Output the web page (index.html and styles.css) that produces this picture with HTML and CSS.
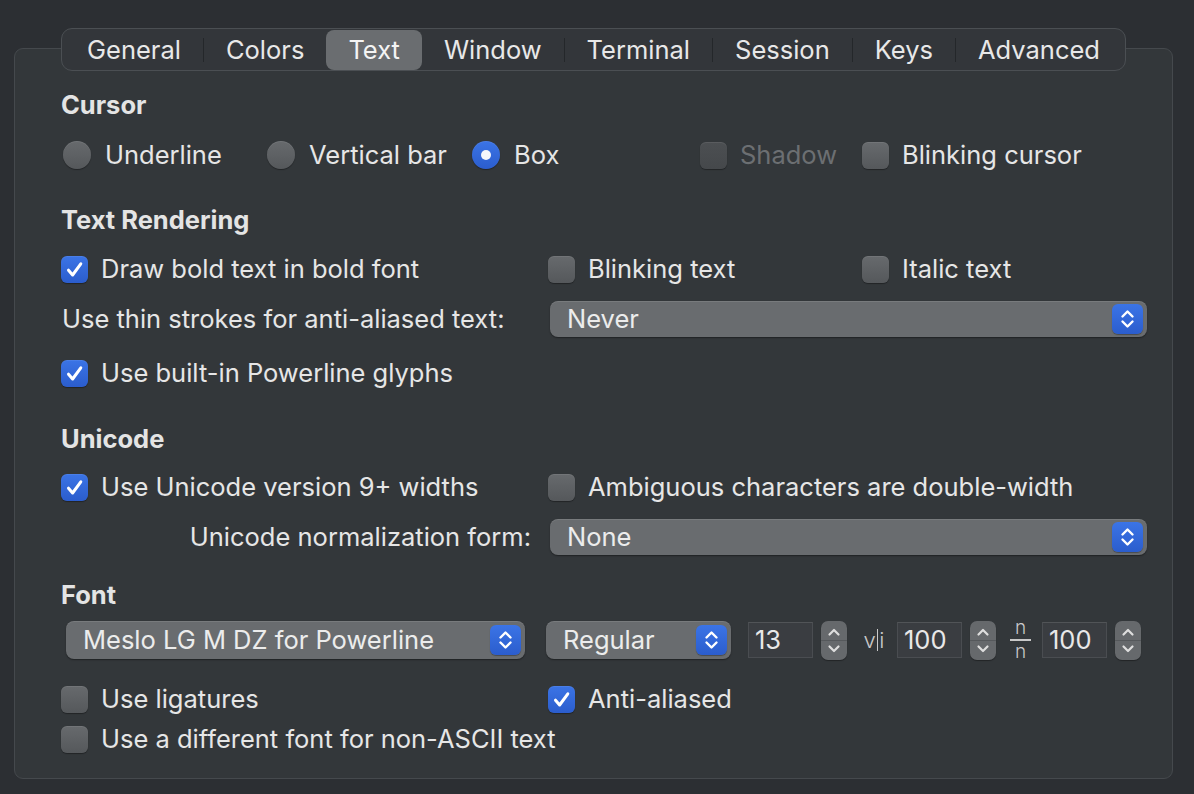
FILE: index.html
```html
<!DOCTYPE html>
<html lang="en">
<head>
<meta charset="utf-8">
<title>Profiles — Text</title>
<link rel="stylesheet" href="styles.css">
</head>
<body>
<div class="window">
  <div class="panel">
    <nav class="tabs">
      <span class="tab">General</span><span class="sep"></span>
      <span class="tab">Colors</span>
      <span class="tab active">Text</span>
      <span class="tab">Window</span><span class="sep"></span>
      <span class="tab">Terminal</span><span class="sep"></span>
      <span class="tab">Session</span><span class="sep"></span>
      <span class="tab">Keys</span><span class="sep"></span>
      <span class="tab">Advanced</span>
    </nav>

    <div class="content">
      <div class="title title-cursor">Cursor</div>
      <div class="row cursor-row">
        <label class="opt"><span class="radio"></span>Underline</label>
        <label class="opt"><span class="radio"></span>Vertical bar</label>
        <label class="opt"><span class="radio on"></span>Box</label>
        <label class="opt disabled"><span class="check"></span>Shadow</label>
        <label class="opt"><span class="check"></span>Blinking cursor</label>
      </div>

      <div class="title title-render">Text Rendering</div>
      <div class="row cols row-bold">
        <label class="opt"><span class="check on"><svg viewBox="0 0 27 27"><path d="M7.5 14.2 L11.6 19 L19.8 7.8"/></svg></span>Draw bold text in bold font</label>
        <label class="opt"><span class="check"></span>Blinking text</label>
        <label class="opt"><span class="check"></span>Italic text</label>
      </div>
      <div class="row form-row row-thin">
        <span class="form-label">Use thin strokes for anti-aliased text:</span>
        <span class="popup">Never<span class="pop-btn"><svg viewBox="0 0 31 30"><path d="M10.5 12.5 L15.5 7.5 L20.5 12.5 M10.5 17.5 L15.5 22.5 L20.5 17.5"/></svg></span></span>
      </div>
      <div class="row row-powerline">
        <label class="opt"><span class="check on"><svg viewBox="0 0 27 27"><path d="M7.5 14.2 L11.6 19 L19.8 7.8"/></svg></span>Use built-in Powerline glyphs</label>
      </div>

      <div class="title title-unicode">Unicode</div>
      <div class="row cols row-uni">
        <label class="opt"><span class="check on"><svg viewBox="0 0 27 27"><path d="M7.5 14.2 L11.6 19 L19.8 7.8"/></svg></span>Use Unicode version 9+ widths</label>
        <label class="opt span2"><span class="check"></span>Ambiguous characters are double-width</label>
      </div>
      <div class="row form-row row-norm">
        <span class="form-label right">Unicode normalization form:</span>
        <span class="popup">None<span class="pop-btn"><svg viewBox="0 0 31 30"><path d="M10.5 12.5 L15.5 7.5 L20.5 12.5 M10.5 17.5 L15.5 22.5 L20.5 17.5"/></svg></span></span>
      </div>

      <div class="title title-font">Font</div>
      <div class="row font-row">
        <span class="popup tall pop-family">Meslo LG M DZ for Powerline<span class="pop-btn"><svg viewBox="0 0 31 30"><path d="M10.5 12.5 L15.5 7.5 L20.5 12.5 M10.5 17.5 L15.5 22.5 L20.5 17.5"/></svg></span></span>
        <span class="popup tall pop-style">Regular<span class="pop-btn"><svg viewBox="0 0 31 30"><path d="M10.5 12.5 L15.5 7.5 L20.5 12.5 M10.5 17.5 L15.5 22.5 L20.5 17.5"/></svg></span></span>
        <span class="num num-size">
          <span class="field">13</span>
          <span class="stepper"><svg viewBox="0 0 25 39"><path class="div" d="M0 19.5 H25"/><path d="M8 13.5 L12.5 9 L17 13.5 M8 25.5 L12.5 30 L17 25.5"/></svg></span>
        </span>
        <span class="glyph-vi">v<span class="bar"></span>i</span>
        <span class="num">
          <span class="field">100</span>
          <span class="stepper"><svg viewBox="0 0 25 39"><path class="div" d="M0 19.5 H25"/><path d="M8 13.5 L12.5 9 L17 13.5 M8 25.5 L12.5 30 L17 25.5"/></svg></span>
        </span>
        <span class="glyph-nn"><span>n</span><span class="line"></span><span>n</span></span>
        <span class="num">
          <span class="field">100</span>
          <span class="stepper"><svg viewBox="0 0 25 39"><path class="div" d="M0 19.5 H25"/><path d="M8 13.5 L12.5 9 L17 13.5 M8 25.5 L12.5 30 L17 25.5"/></svg></span>
        </span>
      </div>
      <div class="row cols row-lig">
        <label class="opt"><span class="check"></span>Use ligatures</label>
        <label class="opt"><span class="check on"><svg viewBox="0 0 27 27"><path d="M7.5 14.2 L11.6 19 L19.8 7.8"/></svg></span>Anti-aliased</label>
      </div>
      <div class="row row-ascii">
        <label class="opt"><span class="check"></span>Use a different font for non-ASCII text</label>
      </div>
    </div>
  </div>
</div>
</body>
</html>
```

FILE: styles.css
```css
* { box-sizing: border-box; }

html, body {
  margin: 0;
  height: 100%;
}

body {
  background: #2c2f33;
  color: #e6e6e6;
  font-family: Inter, "Noto Sans", "Liberation Sans", sans-serif;
  font-size: 25.5px;
  overflow: hidden;
}

.window {
  height: 794px;
  padding: 48px 21px 15px 14px;
}

.panel {
  height: 731px;
  display: flex;
  flex-direction: column;
  background: #33373a;
  border: 1px solid #45494d;
  border-radius: 9px;
}

/* ---------- segmented tabs ---------- */
.tabs {
  align-self: center;
  margin-top: -21px;
  height: 43px;
  display: flex;
  align-items: center;
  padding: 0 3px;
  background: #33363a;
  border: 1px solid #4b4f53;
  border-radius: 11px;
}

.tab {
  height: 40px;
  line-height: 39px;
  padding: 0 22px;
  border-radius: 8px;
  color: #e8e8e8;
  white-space: nowrap;
}

.tab.active {
  background: #6a6d70;
  color: #f4f4f4;
}

.sep {
  width: 1px;
  height: 24px;
  background: #24272a;
}

/* ---------- content ---------- */
.content {
  display: flex;
  flex-direction: column;
  padding: 0 25px 0 46px;
}

.title {
  height: 32px;
  line-height: 32px;
  font-weight: 700;
  color: #e4e4e4;
}

.title-cursor { margin-top: 18px; }
.title-render { margin-top: 31px; }
.title-unicode { margin-top: 32px; }
.title-font { margin-top: 24px; }

.row {
  height: 36px;
  display: flex;
  align-items: center;
  margin-top: 14px;
  line-height: 34px;
}

.cursor-row {
  display: grid;
  grid-template-columns: 204px 205px 228px 162px 1fr;
  padding-left: 2px;
  margin-top: 16px;
}

.cols {
  display: grid;
  grid-template-columns: 487px 314px 1fr;
}

.span2 { grid-column: 2 / 4; }

.row-bold { margin-top: 15px; }
.row-powerline { margin-top: 18px; }
.row-lig { margin-top: 21px; }
.row-ascii { margin-top: 4px; }

.opt {
  display: flex;
  align-items: center;
  gap: 13px;
  white-space: nowrap;
}

.opt.disabled { color: #6c6f72; }

/* ---------- checkbox & radio ---------- */
.check,
.radio {
  flex: none;
  width: 27px;
  height: 27px;
  background: linear-gradient(#676a6d, #55585b);
  box-shadow: inset 0 1px 0 rgba(255, 255, 255, 0.08), 0 1px 1px rgba(0, 0, 0, 0.35);
}

.check {
  border-radius: 6px;
  display: flex;
  align-items: center;
  justify-content: center;
}

.disabled .check {
  background: linear-gradient(#4c4f52, #45484b);
}

.check.on {
  background: linear-gradient(#3b74e6, #2b5dcd);
}

.check svg {
  width: 27px;
  height: 27px;
}

.check svg path {
  fill: none;
  stroke: #fff;
  stroke-width: 3;
  stroke-linecap: round;
  stroke-linejoin: round;
}

.radio {
  width: 28px;
  height: 28px;
  border-radius: 50%;
  display: flex;
  align-items: center;
  justify-content: center;
  margin-right: 1px;
}

.radio.on {
  background: linear-gradient(#3b74e6, #2b5dcd);
}

.radio.on::after {
  content: "";
  width: 10px;
  height: 10px;
  border-radius: 50%;
  background: #f4f6fb;
}

/* ---------- form rows ---------- */
.form-row {
  display: grid;
  grid-template-columns: 489px 1fr;
}

.form-label {
  padding-left: 1px;
  white-space: nowrap;
}

.form-label.right {
  justify-self: end;
  padding-right: 19px;
}

.popup {
  position: relative;
  height: 36px;
  display: flex;
  align-items: center;
  padding-left: 17px;
  background: #696c6f;
  border-radius: 8px;
  box-shadow: inset 0 1px 0 rgba(255, 255, 255, 0.1), 0 1px 1.5px rgba(0, 0, 0, 0.4);
  color: #ececec;
  white-space: nowrap;
}

.popup.tall { height: 38px; }

.pop-btn {
  position: absolute;
  right: 4px;
  top: 50%;
  margin-top: -15px;
  width: 31px;
  height: 30px;
  border-radius: 6px;
  background: linear-gradient(#3b74e6, #2b5dcd);
  box-shadow: 0 1px 1px rgba(0, 0, 0, 0.3);
}

.pop-btn svg,
.stepper svg {
  display: block;
  width: 100%;
  height: 100%;
}

.pop-btn svg path {
  fill: none;
  stroke: #fff;
  stroke-width: 2.4;
  stroke-linecap: round;
  stroke-linejoin: round;
}

/* ---------- font row ---------- */
.font-row {
  height: 40px;
  margin-top: 9px;
}

.pop-family {
  width: 459px;
  margin-left: 5px;
}

.pop-style {
  width: 185px;
  margin-left: 21px;
}

.num {
  display: flex;
  align-items: center;
  gap: 8px;
}

.num-size { margin-left: 17px; }

.field {
  width: 65px;
  height: 36px;
  line-height: 34px;
  padding-left: 6px;
  background: #3a3d41;
  border: 1px solid #4a4d51;
  border-top-color: #515457;
  color: #e8e8e8;
}

.stepper {
  width: 26px;
  height: 39px;
  border-radius: 7px;
  background: #66696c;
  box-shadow: 0 1px 1px rgba(0, 0, 0, 0.35);
}

.stepper svg path {
  fill: none;
  stroke: #dedede;
  stroke-width: 2.2;
  stroke-linecap: round;
  stroke-linejoin: round;
}

.stepper svg path.div {
  stroke: #55585b;
  stroke-width: 1;
}

.glyph-vi {
  width: 24px;
  margin: 0 11px 0 15px;
  display: flex;
  align-items: center;
  justify-content: center;
  font-size: 22px;
  font-weight: 300;
  color: #c9c9c9;
}

.glyph-vi .bar {
  width: 1.5px;
  height: 22px;
  margin: 0 1px 0 1px;
  background: #c9c9c9;
}

.glyph-nn {
  width: 21px;
  margin: 0 11px 0 14px;
  display: flex;
  flex-direction: column;
  align-items: center;
  font-size: 19px;
  font-weight: 300;
  line-height: 16px;
  color: #c9c9c9;
}

.glyph-nn .line {
  width: 21px;
  height: 1.5px;
  margin: 3px 0 3px;
  background: #c9c9c9;
}
```
